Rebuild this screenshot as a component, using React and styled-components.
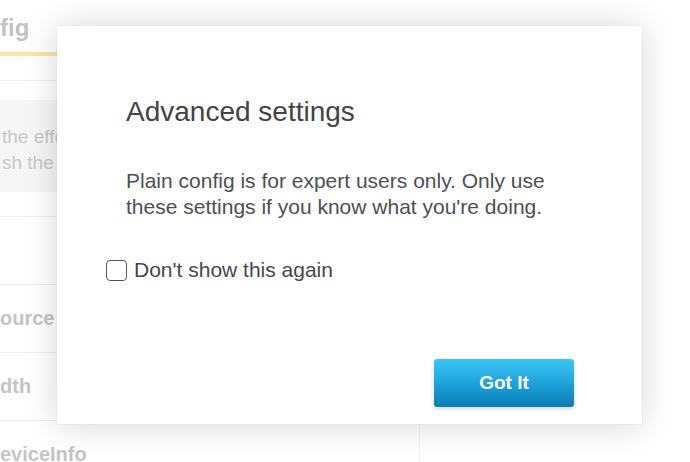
import React from "react";
import styled, { createGlobalStyle } from "styled-components";

const Global = createGlobalStyle`
  html, body { margin: 0; padding: 0; background: #fff; }
  body { font-family: "Liberation Sans", Arial, sans-serif; }
  * { box-sizing: border-box; }
`;

const Screen = styled.div`
  position: relative;
  width: 690px;
  height: 462px;
  overflow: hidden;
  background: #fff;
`;

const Column = styled.div`
  width: 420px;
  display: flex;
  flex-direction: column;
`;

const Header = styled.div`
  height: 81px;
  border-bottom: 1px solid #f1f1f1;
  display: flex;
  align-items: flex-start;
`;

const Tab = styled.div`
  margin-top: 14px;
  width: 220px;
  font-size: 24px;
  line-height: 28px;
  font-weight: bold;
  color: #c2c2c2;
  padding-bottom: 10px;
  border-bottom: 4px solid #f9e6aa;
`;

const NoticeSection = styled.div`
  padding: 19px 0 24px;
  border-bottom: 1px solid #f1f1f1;
`;

const Notice = styled.div`
  height: 92px;
  background: #f6f6f6;
  padding: 24px 0 0 2px;
  font-size: 19px;
  line-height: 26px;
  color: #c8c8c8;
`;

const Rows = styled.div`
  border-right: 1px solid #efefef;
  display: flex;
  flex-direction: column;
`;

const Row = styled.div`
  height: 68px;
  border-bottom: 1px solid #f1f1f1;
  display: flex;
  align-items: center;
  font-size: 20px;
  font-weight: bold;
  color: #c4c4c4;
  white-space: nowrap;
`;

const Modal = styled.div`
  position: absolute;
  left: 57px;
  top: 26px;
  width: 585px;
  height: 398px;
  background: #fff;
  box-shadow: 0 0 1px rgba(0, 0, 0, 0.14), 0 1px 32px rgba(0, 0, 0, 0.17);
  display: flex;
  flex-direction: column;
  padding: 70px 68px 17px 49px;
`;

const Title = styled.h2`
  margin: 0 0 0 20px;
  font-size: 28px;
  line-height: 32px;
  font-weight: normal;
  color: #444;
`;

const Body = styled.p`
  margin: 40px 0 0 20px;
  max-width: 450px;
  font-size: 21px;
  line-height: 26px;
  color: #4f4f4f;
`;

const CheckRow = styled.label`
  margin-top: 37px;
  display: flex;
  align-items: center;
  gap: 7px;
  font-size: 21px;
  line-height: 26px;
  color: #474747;
  cursor: pointer;
`;

const Box = styled.span`
  width: 21px;
  height: 21px;
  border: 1.5px solid #555;
  border-radius: 4px;
  background: #fff;
  flex: none;
`;

const Footer = styled.div`
  margin-top: auto;
  display: flex;
  justify-content: flex-end;
`;

const Button = styled.button`
  width: 140px;
  height: 48px;
  border: none;
  border-radius: 3px;
  background: linear-gradient(to bottom, #3dc5f6 0%, #1ea3db 50%, #0a7cb4 100%);
  box-shadow: 0 2px 4px rgba(0, 0, 0, 0.16);
  color: #fff;
  font-family: "Liberation Sans", Arial, sans-serif;
  font-size: 19px;
  font-weight: bold;
  cursor: pointer;
`;

export default function App() {
  return (
    <>
      <Global />
      <Screen>
        <Column>
          <Header>
            <Tab>fig</Tab>
          </Header>
          <NoticeSection>
            <Notice>
              the effect of these settings
              <br />
              sh the page
            </Notice>
          </NoticeSection>
          <Rows>
            <Row />
            <Row>ource</Row>
            <Row>dth</Row>
            <Row>eviceInfo</Row>
          </Rows>
        </Column>
        <Modal role="dialog" aria-label="Advanced settings">
          <Title>Advanced settings</Title>
          <Body>
            Plain config is for expert users only. Only use these settings if you know what
            you're doing.
          </Body>
          <CheckRow>
            <Box />
            Don't show this again
          </CheckRow>
          <Footer>
            <Button>Got It</Button>
          </Footer>
        </Modal>
      </Screen>
    </>
  );
}
